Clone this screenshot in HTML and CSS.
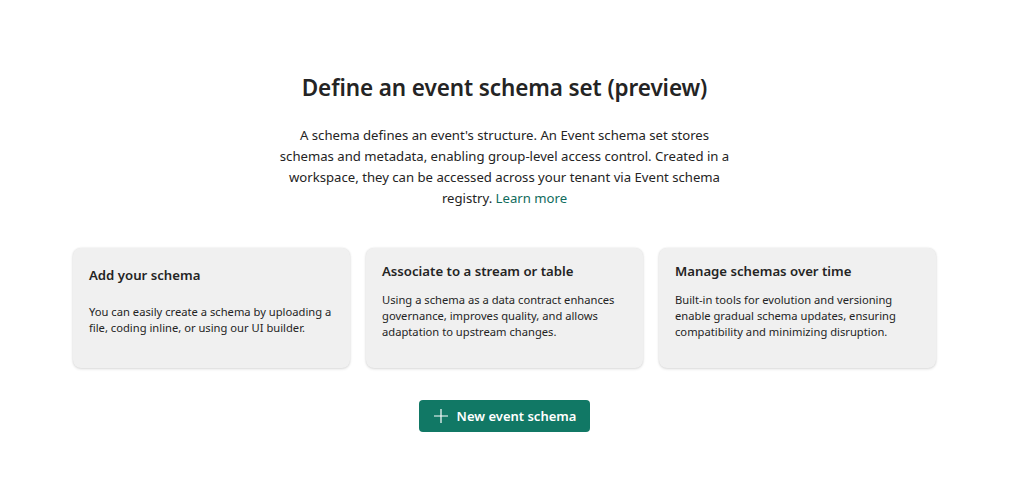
FILE: index.html
```html
<!DOCTYPE html>
<html lang="en">
<head>
<meta charset="utf-8">
<title>Define an event schema set</title>
<link rel="stylesheet" href="styles.css">
</head>
<body>
<main class="page">
  <h1 class="title">Define an event schema set (preview)</h1>
  <p class="intro">A schema defines an event's structure. An Event schema set stores schemas and metadata, enabling group-level access control. Created in a workspace, they can be accessed across your tenant via Event schema registry. <a class="link" href="#">Learn more</a></p>
  <div class="cards">
    <div class="card card-first">
      <div class="card-title">Add your schema</div>
      <div class="card-text">You can easily create a schema by uploading a file, coding inline, or using our UI builder.</div>
    </div>
    <div class="card">
      <div class="card-title">Associate to a stream or table</div>
      <div class="card-text">Using a schema as a data contract enhances governance, improves quality, and allows adaptation to upstream changes.</div>
    </div>
    <div class="card">
      <div class="card-title">Manage schemas over time</div>
      <div class="card-text">Built-in tools for evolution and versioning enable gradual schema updates, ensuring compatibility and minimizing disruption.</div>
    </div>
  </div>
  <button class="primary" type="button">
    <svg class="plus" width="16" height="16" viewBox="0 0 16 16" aria-hidden="true"><path d="M8 1v14M1 8h14" stroke="#fff" stroke-width="1.2" fill="none"/></svg>
    <span>New event schema</span>
  </button>
</main>
</body>
</html>
```

FILE: styles.css
```css
html, body {
  margin: 0;
  padding: 0;
  background: #ffffff;
}
body {
  font-family: "Noto Sans", "Open Sans", sans-serif;
  color: #242424;
}
.page {
  display: flex;
  flex-direction: column;
  align-items: center;
  padding-top: 70px;
}
.title {
  margin: 0;
  font-size: 22.5px;
  font-weight: 600;
  line-height: 36px;
  letter-spacing: -0.1px;
}
.intro {
  margin: 19px 0 0;
  width: 458px;
  text-align: center;
  font-size: 13.15px;
  line-height: 21px;
}
.link {
  color: #0f6b5c;
  text-decoration: none;
}
.cards {
  margin-top: 39px;
  display: grid;
  grid-template-columns: repeat(3, 277px);
  gap: 16px;
}
.card {
  height: 120px;
  box-sizing: border-box;
  background: #f0f0f0;
  border-radius: 8px;
  box-shadow: 0 1px 3px rgba(0,0,0,0.14), 0 0 2px rgba(0,0,0,0.08);
  padding: 13px 16px;
}
.card-title {
  font-size: 13.2px;
  font-weight: 600;
  line-height: 20px;
}
.card-text {
  margin-top: 11px;
  font-size: 11.2px;
  line-height: 16px;
}
.card-first .card-title {
  margin-top: 4px;
}
.card-first .card-text {
  margin-top: 19px;
}
.primary {
  margin-top: 32px;
  display: flex;
  align-items: center;
  gap: 8px;
  height: 32px;
  width: 171px;
  justify-content: center;
  padding: 0 8px;
  background: #117865;
  color: #fff;
  border: none;
  border-radius: 4px;
  font-family: "Noto Sans", "Open Sans", sans-serif;
  font-size: 13px;
  font-weight: 600;
  white-space: nowrap;
}
.plus {
  display: block;
}
```
